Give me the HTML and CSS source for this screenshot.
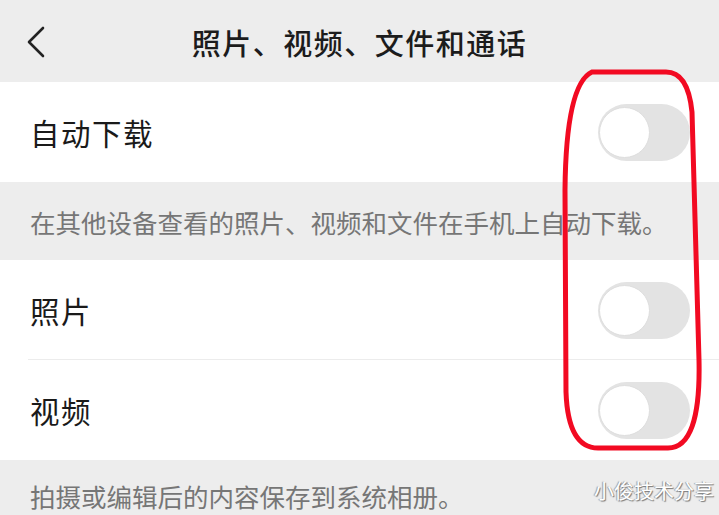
FILE: index.html
```html
<!DOCTYPE html>
<html lang="zh-CN">
<head>
    <meta charset="UTF-8">
    <meta name="viewport" content="width=device-width, initial-scale=1.0">
    <title>照片、视频、文件和通话</title>
    <link rel="stylesheet" href="styles.css">
</head>
<body>
    <div class="page">
        <div class="nav">
            <div class="back">
                <svg width="20" height="32" viewBox="0 0 20 32">
                    <path d="M17 2 L3 16 L17 30" fill="none" stroke="#222" stroke-width="2.6" stroke-linecap="round" stroke-linejoin="round"/>
                </svg>
            </div>
            <div class="title">照片、视频、文件和通话</div>
            <div></div>
        </div>

        <div class="cell">
            <span class="label">自动下载</span>
            <div class="switch"><div class="knob"></div></div>
        </div>
        <div class="tip tip-mid">在其他设备查看的照片、视频和文件在手机上自动下载。</div>

        <div class="cell">
            <span class="label">照片</span>
            <div class="switch"><div class="knob"></div></div>
        </div>
        <div class="divider"></div>
        <div class="cell">
            <span class="label">视频</span>
            <div class="switch"><div class="knob"></div></div>
        </div>
        <div class="tip tip-end">拍摄或编辑后的内容保存到系统相册。</div>

        <!-- red mark drawn over the switches -->
        <svg class="mark" width="719" height="515" viewBox="0 0 719 515">
            <path d="M592 72 L666 72 Q688 72 692 112 L699 360 Q701 448 668 448 L598 448 Q568 448 566 392 L565 190 Q566 84 592 72 Z"
                  fill="none" stroke="#f20a22" stroke-width="5"/>
        </svg>

        <div class="watermark">小俊技术分享</div>
    </div>
</body>
</html>
```

FILE: styles.css
```css
body {
    margin: 0;
    padding: 0;
    background-color: #ededed;
    font-family: "Noto Sans CJK SC", "Noto Sans", sans-serif;
}

.page {
    position: relative;
    width: 719px;
    height: 515px;
    overflow: hidden;
    background-color: #ededed;
}

.nav {
    display: grid;
    grid-template-columns: 80px 1fr 80px;
    align-items: center;
    height: 82px;
    background-color: #ededed;
}

.back {
    display: flex;
    align-items: center;
    padding-left: 26px;
    padding-top: 2px;
}

.title {
    text-align: center;
    font-size: 29px;
    font-weight: 500;
    color: #1c1c1c;
    letter-spacing: 1.5px;
    padding-top: 2px;
}

.cell {
    display: flex;
    align-items: center;
    justify-content: space-between;
    height: 100px;
    padding: 0 29px 0 30px;
    background-color: #fff;
}

.label {
    font-size: 29.5px;
    color: #1a1a1a;
    letter-spacing: 1.5px;
}

.divider {
    height: 1px;
    background-color: #fff;
    border-left: 28px solid #fff;
    box-shadow: inset 0 0 0 1px #ececec;
    margin-top: -1px;
}

.switch {
    width: 92px;
    height: 57px;
    border-radius: 29px;
    background-color: #e3e3e3;
    display: flex;
    align-items: center;
    padding-left: 1px;
    box-sizing: border-box;
}

.knob {
    width: 51px;
    height: 51px;
    border-radius: 50%;
    background-color: #fff;
    border: 1px solid #dedede;
    box-sizing: border-box;
}

.tip {
    padding-left: 30px;
    font-size: 25.5px;
    color: #767676;
    background-color: #ededed;
    display: flex;
    align-items: center;
}

.tip-mid {
    height: 78px;
}

.tip-end {
    height: 66px;
    align-items: flex-start;
    padding-top: 17px;
    box-sizing: border-box;
}

.mark {
    position: absolute;
    left: 0;
    top: 0;
    pointer-events: none;
}

.watermark {
    position: absolute;
    right: 5px;
    bottom: 10px;
    font-size: 20px;
    color: #fff;
    text-shadow: 1px 1px 1px #777, -1px 0 1px #999;
}
```
